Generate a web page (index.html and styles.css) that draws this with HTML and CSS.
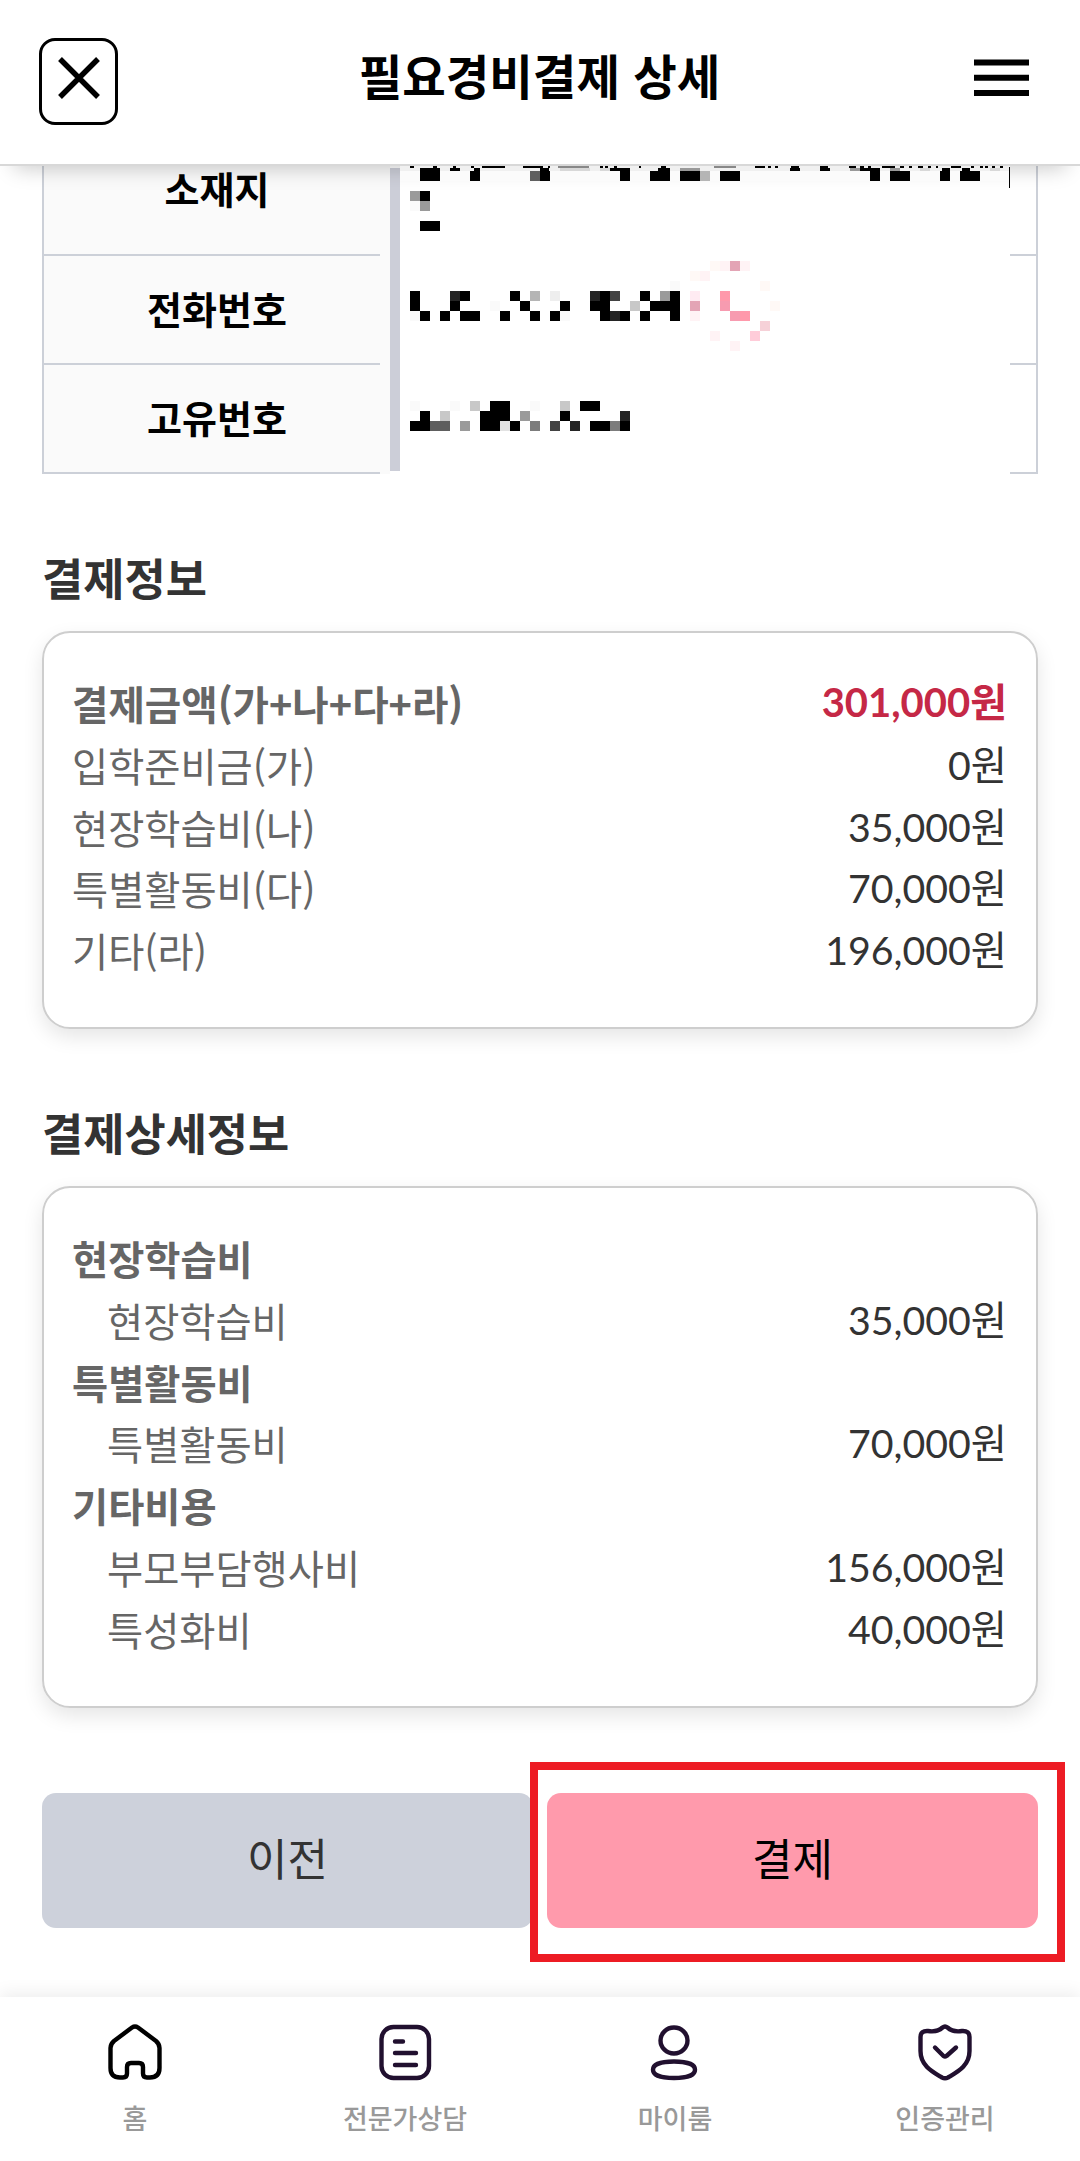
FILE: index.html
```html
<!DOCTYPE html>
<html lang="ko">
<head>
  <meta charset="UTF-8">
  <title>필요경비결제 상세</title>
  <meta name="viewport" content="width=device-width, initial-scale=1.0">
  <link rel="stylesheet" href="styles.css">
</head>
<body>

  <header class="header">
    <button class="close-btn" aria-label="닫기">
      <svg width="42" height="42" viewBox="0 0 42 42"><path d="M2 2L40 40M40 2L2 40" stroke="#000" stroke-width="5.4"/></svg>
    </button>
    <h1>필요경비결제 상세</h1>
    <button class="menu-btn" aria-label="메뉴">
      <svg width="55" height="38" viewBox="0 0 55 38"><path d="M0 3.5h55M0 18.7h55M0 34h55" stroke="#000" stroke-width="6"/></svg>
    </button>
  </header>

  <main class="content">
    <div class="info-table">
      <div class="labels">
        <div class="label first">소재지</div>
        <div class="label">전화번호</div>
        <div class="label">고유번호</div>
      </div>
      <div class="divider"></div>
      <!-- 개인정보 모자이크 -->
      <svg class="mosaic" width="610" height="308" viewBox="400 166 610 308" shape-rendering="crispEdges" fill="none">
        <path stroke="#f0f0f0" stroke-width="5" d="M400 168.500h610"/>
        <path stroke="#fbfbfb" stroke-width="10" d="M400 176h610"/>
        <path stroke="#000" stroke-width="2" d="M410 167h4M433 167h4M453 167h3M471 167h3M482 167h23M523 167h20M548 167h2M600 167h3M605 167h3M614 167h3M639 167h2M661 167h5M755 167h10M768 167h3M775 167h3M791 167h8M820 167h8M849 167h7M860 167h4M868 167h3M882 167h13M900 167h4M909 167h3M918 167h5M928 167h3M936 167h2M951 167h10M971 167h3M980 167h3M985 167h3M992 167h3M1000 167h3"/>
        <path stroke="#888" stroke-width="2" d="M558 167h31M714 167h22"/>
        <path stroke="#000" stroke-width="3" d="M420 169.500h20M450 169.500h10M474 169.500h6M540 169.500h9M610 169.500h20M658 169.500h12M790 169.500h10M820 169.500h10M860 169.500h20M942 169.500h8M962 169.500h8"/>
        <path stroke="#999" stroke-width="3" d="M680 169.500h20M850 169.500h10M890 169.500h10"/>
        <path stroke="#d8d8d8" stroke-width="3" d="M560 169.500h30M600 169.500h10M920 169.500h10M990 169.500h10"/>
        <path stroke="#000" stroke-width="1" d="M1009.500 167v21"/>
        <path stroke="#000" stroke-width="10" d="M420 176h20M470 176h10M540 176h10M620 176h10M650 176h20M680 176h20M720 176h20M870 176h10M890 176h20M940 176h10M960 176h20
          M420 196h10M420 226h20
          M410 296h10M460 296h10M510 296h10M600 296h10M640 296h10M670 296h10
          M410 306h10M450 306h10M520 306h10M560 306h10M590 306h20M650 306h30
          M420 316h10M440 316h10M460 316h20M500 316h10M530 316h10M550 316h10M600 316h10M620 316h10M640 316h10M670 316h10
          M490 406h20M580 406h20M420 416h10M480 416h30M560 416h10
          M410 426h20M480 426h20M510 426h10M590 426h20M620 426h10"/>
        <path stroke="#242424" stroke-width="10" d="M450 296h10M590 296h10M610 316h10M620 416h10M570 426h10"/>
        <path stroke="#424242" stroke-width="10" d="M610 296h10M550 426h10"/>
        <path stroke="#5e5e5e" stroke-width="10" d="M530 176h10M430 426h20"/>
        <path stroke="#7c7c7c" stroke-width="10" d="M530 426h10M610 426h10"/>
        <path stroke="#9a9a9a" stroke-width="10" d="M410 196h10M420 206h10M660 296h10M520 416h10M460 426h10"/>
        <path stroke="#b5b5b5" stroke-width="10" d="M700 176h10M530 296h10"/>
        <path stroke="#c8c8c8" stroke-width="10" d="M630 306h10M470 406h10M560 406h10M440 416h10"/>
        <path stroke="#e2e2e2" stroke-width="10" d="M500 426h10"/>
        <path stroke="#eee" stroke-width="10" d="M550 296h10"/>
        <path stroke="#fafafa" stroke-width="10" d="M410 206h10M670 286h10M490 306h10M410 316h10M560 316h10M410 406h10M450 406h10M530 406h10"/>
        <path stroke="#ff99ab" stroke-width="10" d="M720 296h10M740 316h10"/>
        <path stroke="#f79bb0" stroke-width="10" d="M720 306h10M730 316h10"/>
        <path stroke="#e3a4b5" stroke-width="10" d="M730 266h10M690 306h10"/>
        <path stroke="#ffccd9" stroke-width="10" d="M750 336h10"/>
        <path stroke="#f6d1d8" stroke-width="10" d="M760 326h10"/>
        <path stroke="#ffebf2" stroke-width="10" d="M690 296h10"/>
        <path stroke="#fff3f5" stroke-width="10" d="M720 266h10M740 266h10M700 276h10M690 316h10M710 336h10M730 346h10"/>
        <path stroke="#fff9f6" stroke-width="10" d="M760 286h10M770 306h10M690 276h10M710 266h10"/>
      </svg>
      <div class="edge">
        <div class="edge-cell first"></div>
        <div class="edge-cell"></div>
        <div class="edge-cell"></div>
      </div>
    </div>

    <h2>결제정보</h2>
    <div class="card">
      <div class="row total"><span class="name">결제금액(가+나+다+라)</span><span class="price">301,000원</span></div>
      <div class="row"><span class="name">입학준비금(가)</span><span class="price">0원</span></div>
      <div class="row"><span class="name">현장학습비(나)</span><span class="price">35,000원</span></div>
      <div class="row"><span class="name">특별활동비(다)</span><span class="price">70,000원</span></div>
      <div class="row"><span class="name">기타(라)</span><span class="price">196,000원</span></div>
    </div>

    <h2>결제상세정보</h2>
    <div class="card">
      <div class="row group"><span class="name">현장학습비</span></div>
      <div class="row sub"><span class="name">현장학습비</span><span class="price">35,000원</span></div>
      <div class="row group"><span class="name">특별활동비</span></div>
      <div class="row sub"><span class="name">특별활동비</span><span class="price">70,000원</span></div>
      <div class="row group"><span class="name">기타비용</span></div>
      <div class="row sub"><span class="name">부모부담행사비</span><span class="price">156,000원</span></div>
      <div class="row sub"><span class="name">특성화비</span><span class="price">40,000원</span></div>
    </div>

    <div class="buttons">
      <button class="btn prev">이전</button>
      <button class="btn pay">결제</button>
    </div>
  </main>

  <nav class="bottom-nav">
    <a class="nav-item">
      <svg width="60" height="60" viewBox="0 0 60 60"><path d="M27 4.500Q30 2.500 33 4.500L51 18Q54.500 21 54.500 25V45Q54.500 54.500 45 54.500H42Q38 54.500 38 50.500V44Q38 40 34 40H26Q22 40 22 44V50.500Q22 54.500 18 54.500H15Q5.500 54.500 5.500 45V25Q5.500 21 9 18Z" stroke="#000"/></svg>
      <span>홈</span>
    </a>
    <a class="nav-item">
      <svg width="60" height="60" viewBox="0 0 60 60"><rect x="6.500" y="4" width="47.500" height="51" rx="12"/><path d="M20 18.500H28M20 30H41M20 42H41"/></svg>
      <span>전문가상담</span>
    </a>
    <a class="nav-item">
      <svg width="60" height="60" viewBox="0 0 60 60"><ellipse cx="29" cy="17.500" rx="13.500" ry="13"/><path d="M29 38.500C42 38.500 50 41.500 50 46.700S42 55 29 55S8 52 8 46.700S16 38.500 29 38.500Z"/></svg>
      <span>마이룸</span>
    </a>
    <a class="nav-item">
      <svg width="60" height="60" viewBox="0 0 60 60"><path d="M27.500 4.500Q30 2.500 32.500 4.500Q38 9.500 47 8Q54.500 7.500 54.500 14V28C54.500 43 42 49 33 54.500Q30 56 27 54.500C18 49 5.500 43 5.500 28V14Q5.500 7.500 13 8Q22 9.500 27.500 4.500Z"/><path d="M20 24.500L28.500 33Q30 34 31.500 33L41 24.500"/></svg>
      <span>인증관리</span>
    </a>
  </nav>

</body>
</html>
```
FILE: styles.css
```css
* {
  box-sizing: border-box;
}

body {
  margin: 0;
  height: 2161px;
  display: flex;
  flex-direction: column;
  background-color: #fff;
  color: #000;
  font-family: "Noto Sans CJK KR", "Noto Sans", sans-serif;
  overflow: hidden;
}

button {
  padding: 0;
  border: none;
  background: none;
  font-family: inherit;
  color: #000;
}

svg {
  display: block;
}

.header {
  position: relative;
  z-index: 2;
  flex: none;
  height: 166px;
  padding: 38px 51px 0 39px;
  display: flex;
  justify-content: space-between;
  align-items: flex-start;
  background-color: #fff;
  border-bottom: 2px solid #d8d8d8;
  box-shadow: 0 16px 20px -14px rgba(0, 0, 0, 0.22);
}

.header h1 {
  margin: 0;
  font-size: 47.3px;
  font-weight: 700;
  line-height: 73px;
}

.close-btn {
  display: flex;
  width: 79px;
  height: 87px;
  padding: 16px 0 0 16px;
  border: 3px solid #000;
  border-radius: 16px;
}

.menu-btn {
  width: 55px;
  margin: 21px 0 0 13px;
}

.content {
  flex: 1;
  min-height: 0;
  padding: 0 42px;
}

.info-table {
  display: flex;
  height: 308px;
}

.labels {
  width: 348px;
  background: #fafafa;
  border-left: 2px solid #ccd0d8;
}

.label {
  height: 109px;
  width: 336px;
  padding: 0 0 5px 10px;
  display: flex;
  align-items: center;
  justify-content: center;
  border-bottom: 2px solid #ccd0d8;
  font-size: 38px;
  font-weight: 700;
}

.label.first {
  height: 90px;
  padding-bottom: 45px;
}

.divider {
  width: 10px;
  margin: 2px 0 3px;
  background-color: #ccced8;
}

.mosaic {
  position: relative;
  z-index: 3;
}

.edge {
  flex: 1;
  border-right: 2px solid #ccd0d8;
}

.edge-cell {
  height: 109px;
  border-bottom: 2px solid #ccd0d8;
}

.edge-cell.first {
  height: 90px;
}

h2 {
  margin: 70px 0 21px;
  color: #333;
  font-size: 44.8px;
  font-weight: 700;
  line-height: 66px;
}

.card {
  padding: 39px 29px 46px 28px;
  border: 2px solid #cecece;
  border-radius: 28px;
  box-shadow: 0 8px 20px rgba(0, 0, 0, 0.1);
}

.row {
  display: flex;
  justify-content: space-between;
  height: 61.8px;
  font-size: 39.3px;
  line-height: 61.8px;
}

.name {
  color: #666;
}

.price {
  color: #333;
  font-family: Lato, "Noto Sans CJK KR", sans-serif;
}

.total .name,
.total .price,
.group .name {
  font-weight: 700;
}

.total .name {
  font-size: 39.6px;
}

.total .price {
  color: #c52846;
  font-size: 40px;
}

.sub {
  padding-left: 35px;
}

.buttons {
  display: flex;
  gap: 14px;
  margin-top: 85px;
}

.btn {
  flex: 1;
  height: 135px;
  padding-bottom: 6px;
  border-radius: 14px;
  font-size: 44px;
}

.prev {
  background-color: #cdd1db;
  color: #333;
}

.pay {
  position: relative;
  background-color: #ff9aac;
}

/* 결제 버튼 강조 표시 */
.pay::after {
  content: "";
  position: absolute;
  top: -31px;
  right: -27px;
  bottom: -34px;
  left: -17px;
  border: 8px solid #ed1c24;
}

.bottom-nav {
  flex: none;
  height: 164px;
  display: flex;
  background-color: #fff;
  box-shadow: 0 -4px 16px rgba(0, 0, 0, 0.07);
}

.nav-item {
  flex: 1;
  padding-top: 26px;
  display: flex;
  flex-direction: column;
  align-items: center;
  color: #999;
  font-size: 27px;
  font-weight: 500;
  line-height: 40px;
}

.nav-item svg {
  margin-bottom: 15px;
  fill: none;
  stroke: #21102f;
  stroke-width: 4.4;
  stroke-linecap: round;
  stroke-linejoin: round;
}
```
